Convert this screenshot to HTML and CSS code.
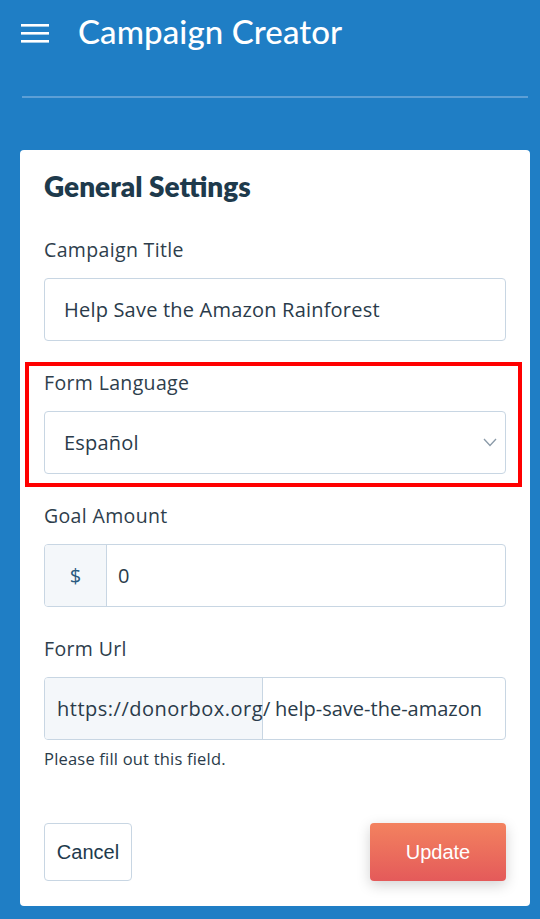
FILE: index.html
```html
<!DOCTYPE html>
<html>
<head>
<meta charset="utf-8">
<link rel="stylesheet" href="styles.css">
</head>
<body>
<header class="topbar">
  <div class="topbar-row">
    <svg class="menu-icon" width="28" height="20" viewBox="0 0 28 20"><rect x="0" y="0" width="28" height="2.6" fill="#fff"/><rect x="0" y="8" width="28" height="2.6" fill="#fff"/><rect x="0" y="16" width="28" height="2.6" fill="#fff"/></svg>
    <h1 class="app-title">Campaign Creator</h1>
  </div>
  <div class="divider"></div>
</header>
<main class="card">
  <h2 class="card-title">General Settings</h2>
  <div class="field first">
    <label class="label">Campaign Title</label>
    <div class="input"><span class="value">Help Save the Amazon Rainforest</span></div>
  </div>
  <div class="field highlighted">
    <label class="label">Form Language</label>
    <div class="input select"><span class="value">Español</span>
      <svg class="chevron" width="14" height="9" viewBox="0 0 14 9"><path d="M1 1 L7 7.5 L13 1" fill="none" stroke="#8a9aa8" stroke-width="1.3"/></svg>
    </div>
  </div>
  <div class="field">
    <label class="label">Goal Amount</label>
    <div class="input group"><span class="addon addon-money">$</span><span class="value group-value">0</span></div>
  </div>
  <div class="field">
    <label class="label">Form Url</label>
    <div class="input group"><span class="addon addon-url"><span class="url-text">https://donorbox.org/</span></span><span class="value url-value">help-save-the-amazon</span></div>
    <p class="hint">Please fill out this field.</p>
  </div>
  <div class="actions">
    <button class="btn btn-cancel">Cancel</button>
    <button class="btn btn-update">Update</button>
  </div>
</main>
</body>
</html>
```
FILE: styles.css
```css
html, body {
  margin: 0;
  padding: 0;
}
body {
  background: #1f7ec5;
  font-family: "Open Sans", "Noto Sans", sans-serif;
  width: 540px;
  height: 919px;
  overflow: hidden;
}
.topbar-row {
  display: flex;
  align-items: center;
  height: 62px;
  padding-left: 21px;
}
.menu-icon {
  display: block;
  margin-top: 5px;
}
.app-title {
  margin: 0 0 0 29px;
  color: #fff;
  font-family: Lato, "Open Sans", sans-serif;
  font-size: 33px;
  font-weight: 500;
  letter-spacing: 0.1px;
}
.divider {
  margin: 34px 0 0 22px;
  width: 506px;
  height: 2px;
  background: #5c9fd6;
}
.card {
  margin: 52px 0 0 20px;
  width: 510px;
  height: 756px;
  box-sizing: border-box;
  background: #fff;
  border-radius: 4px;
  padding: 20px 24px 0 24px;
  display: flex;
  flex-direction: column;
}
.card-title {
  margin: 0;
  font-family: Lato, "Open Sans", sans-serif;
  font-size: 28px;
  font-weight: 800;
  color: #1e3a4c;
  line-height: 32px;
}
.field {
  display: flex;
  flex-direction: column;
  margin-top: 29px;
}
.field.first {
  margin-top: 35px;
}
.label {
  font-size: 19.5px;
  letter-spacing: 0.35px;
  color: #2e3e4c;
  line-height: 26px;
  margin-bottom: 15px;
}
.highlighted {
  position: relative;
}
.highlighted::before {
  content: "";
  position: absolute;
  left: -19px;
  right: -16px;
  top: -8px;
  bottom: -13px;
  border: 4px solid #ff0000;
  pointer-events: none;
}
.input {
  height: 63px;
  box-sizing: border-box;
  border: 1px solid #c8d6e3;
  border-radius: 4px;
  display: flex;
  align-items: center;
  padding: 0 19px;
  font-size: 20px;
  letter-spacing: 0.2px;
  color: #2a3b4a;
}
.select {
  justify-content: space-between;
  padding-right: 8px;
}
.group {
  padding: 0;
  overflow: hidden;
}
.addon {
  height: 100%;
  display: flex;
  align-items: center;
  background: #f4f7fa;
  border-right: 1px solid #c8d6e3;
  box-sizing: border-box;
  flex: none;
}
.addon-money {
  width: 62px;
  justify-content: center;
  color: #2a5a80;
}
.group-value {
  padding-left: 11px;
}
.addon-url {
  width: 218px;
  padding-left: 12px;
  white-space: nowrap;
  overflow: visible;
  position: relative;
}
.url-text {
  position: relative;
  z-index: 1;
  letter-spacing: 0.5px;
}
.url-value {
  padding-left: 12px;
  white-space: nowrap;
  letter-spacing: 0;
}
.hint {
  margin: 8px 0 0 0;
  font-size: 16.5px;
  letter-spacing: 0.2px;
  line-height: 22px;
  color: #2a3b4a;
}
.actions {
  display: flex;
  justify-content: space-between;
  margin-top: 53px;
}
.btn {
  height: 58px;
  border-radius: 4px;
  font-family: "Liberation Sans", Arial, sans-serif;
  font-size: 20px;
  cursor: pointer;
}
.btn-cancel {
  width: 88px;
  background: #fff;
  border: 1px solid #c8d6e3;
  color: #1e3a4c;
}
.btn-update {
  width: 136px;
  border: none;
  color: #fff;
  background: linear-gradient(#f3825f, #e45a5a);
  box-shadow: 0 4px 14px rgba(0, 0, 0, 0.18);
}
```
